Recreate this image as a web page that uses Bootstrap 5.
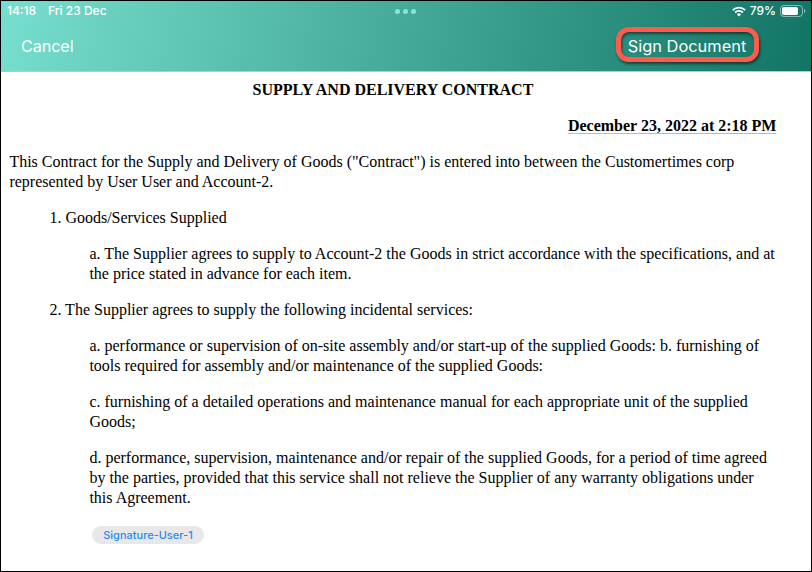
<!DOCTYPE html>
<html lang="en">
<head>
<meta charset="utf-8">
<meta name="viewport" content="width=device-width, initial-scale=1">
<title>Supply and Delivery Contract</title>
<link href="https://cdn.jsdelivr.net/npm/bootstrap@5.3.0/dist/css/bootstrap.min.css" rel="stylesheet">
<style>
  body { font-family: Inter, sans-serif; }
  .screen { height: 572px; border: 1px solid #000; background: #fff; }
  .topbar { height: 71px; background: linear-gradient(100deg, #77dfcf 0%, #45a999 50%, #117464 100%); border-bottom: 1px solid #a9cfc8; }
  .status { height: 20px; padding: 0 5px 0 6px; font-size: 12px; font-weight: 500; line-height: 20px; }
  .status-side { width: 200px; }
  .more-dots { gap: 3px; margin-right: 2px; }
  .more-dots span { width: 5px; height: 5px; border-radius: 50%; background: #84e9d9; }
  .actions { height: 49px; padding: 0 52px 0 20px; }
  .nav-action { font-size: 16.2px; line-height: 20px; color: #fff; background: none; border: 0; }
  .cancel-action { letter-spacing: -.1px; }
  .sign-action { width: 143px; height: 35px; margin-top: -3px; padding: 3px 1px 0 0; font-size: 16.4px; border: 5px solid #fd5b4b; border-radius: 13px; box-shadow: 1px 2px 3px rgba(0,0,0,.55), inset 1px 2px 3px rgba(0,0,0,.5); }
  .contract { font: 16px/20px "Liberation Serif", serif; color: #000; padding: 8px 34.6px 0 8.4px; }
  .contract p { margin-bottom: 16px; white-space: nowrap; }
  .contract .heading { font-size: 16px; line-height: 20px; margin-bottom: 16px; }
  .date-line span { text-decoration: underline; text-decoration-color: #bbb; text-decoration-thickness: 1px; text-underline-offset: 2px; }
  .level-one, .level-two { padding-left: 40px; }
  .signature { width: 112px; height: 18px; margin: 18px 0 0 82.6px; font: 500 11px/18px Inter, sans-serif; color: #2b8af3; background: #e8e8e9; }
</style>
<script src="https://cdn.jsdelivr.net/npm/bootstrap@5.3.0/dist/js/bootstrap.bundle.min.js"></script>
</head>
<body>
<div class="screen overflow-hidden">
  <header class="topbar text-white">
    <div class="status d-flex align-items-center justify-content-between">
      <div class="status-side d-flex"><span>14:18</span><span class="ms-2 ps-1">Fri 23 Dec</span></div>
      <div class="more-dots d-flex"><span></span><span></span><span></span></div>
      <div class="status-side d-flex align-items-center justify-content-end">
        <svg width="14" height="11" viewBox="0 0 14 11" fill="none" stroke="#fff" stroke-width="1.8" aria-hidden="true"><path d="M.8 4.1a8.9 8.9 0 0 1 12.4 0M3.1 6.5a5.6 5.6 0 0 1 7.8 0"/><path d="M7 10.5 4.9 8.4a3 3 0 0 1 4.2 0z" fill="#fff" stroke="none"/></svg>
        <span class="ms-1">79%</span>
        <svg class="ms-1" width="26" height="12" viewBox="0 0 26 12" aria-hidden="true"><rect x=".5" y=".5" width="22" height="11" rx="3.3" fill="none" stroke="#fff" stroke-opacity=".5"/><rect x="2" y="2" width="16" height="8" rx="1.8" fill="#fff"/><path d="M24 4v4c1.9-.7 1.9-3.3 0-4z" fill="#fff" fill-opacity=".5"/></svg>
      </div>
    </div>
    <div class="actions d-flex align-items-center justify-content-between">
      <button type="button" class="nav-action cancel-action p-0">Cancel</button>
      <button type="button" class="nav-action sign-action d-flex align-items-center justify-content-center text-nowrap">Sign Document</button>
    </div>
  </header>
  <main class="contract">
    <h1 class="heading fw-bold text-center">SUPPLY AND DELIVERY CONTRACT</h1>
    <p class="date-line fw-bold text-end"><span>December 23, 2022 at 2:18 PM</span></p>
    <p>This Contract for the Supply and Delivery of Goods ("Contract") is entered into between the Customertimes corp<br>represented by User User and Account-2.</p>
    <div class="level-one">
      <p>1. Goods/Services Supplied</p>
      <div class="level-two">
        <p>a. The Supplier agrees to supply to Account-2 the Goods in strict accordance with the specifications, and at<br>the price stated in advance for each item.</p>
      </div>
      <p>2. The Supplier agrees to supply the following incidental services:</p>
      <div class="level-two">
        <p>a. performance or supervision of on-site assembly and/or start-up of the supplied Goods: b. furnishing of<br>tools required for assembly and/or maintenance of the supplied Goods:</p>
        <p>c. furnishing of a detailed operations and maintenance manual for each appropriate unit of the supplied<br>Goods;</p>
        <p>d. performance, supervision, maintenance and/or repair of the supplied Goods, for a period of time agreed<br>by the parties, provided that this service shall not relieve the Supplier of any warranty obligations under<br>this Agreement.</p>
      </div>
    </div>
    <div class="signature rounded-pill text-center text-nowrap">Signature-User-1</div>
  </main>
</div>
</body>
</html>
